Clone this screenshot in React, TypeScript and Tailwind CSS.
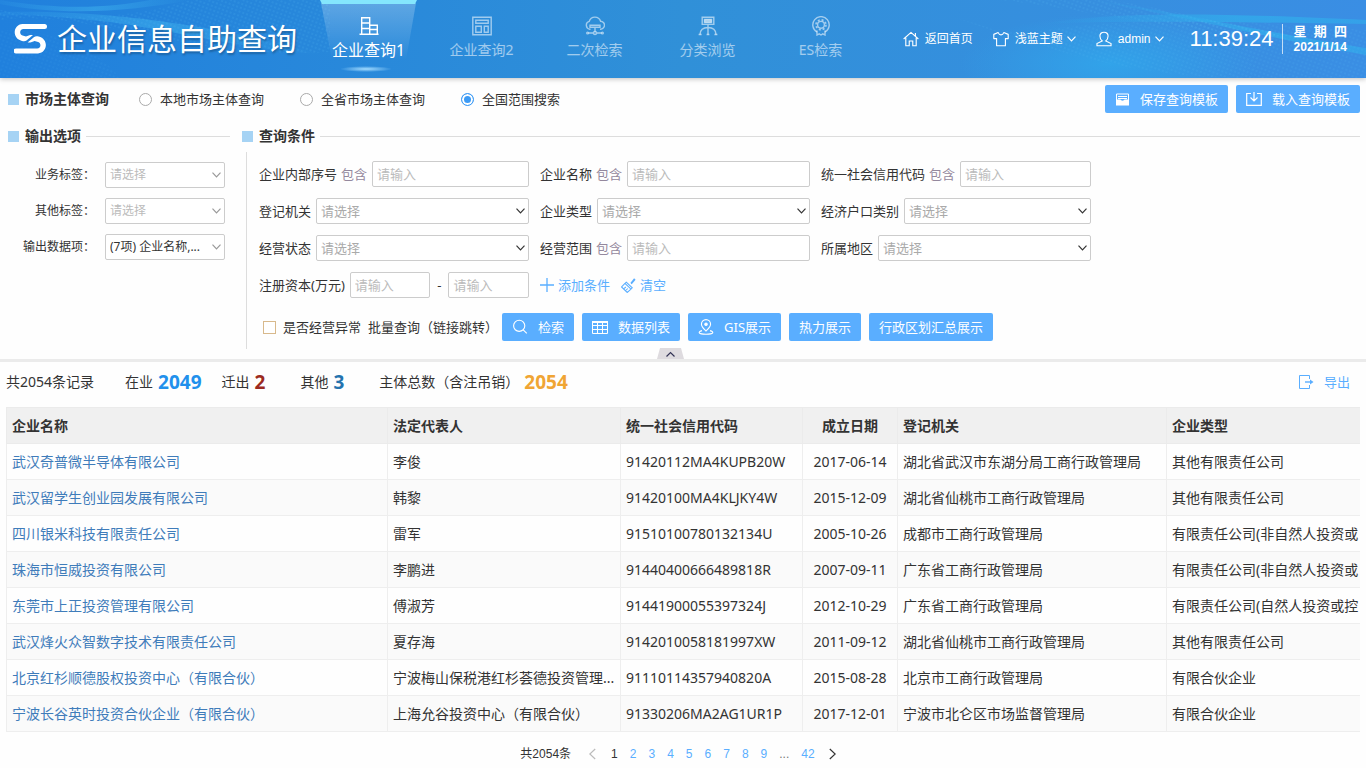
// src/pages/EnterpriseQuery.tsx
import React, { useState } from "react";

type Company = {
  name: string;
  legal: string;
  code: string;
  date: string;
  org: string;
  type: string;
};

const COMPANIES: Company[] = [
  { name: "武汉奇普微半导体有限公司", legal: "李俊", code: "91420112MA4KUPB20W", date: "2017-06-14", org: "湖北省武汉市东湖分局工商行政管理局", type: "其他有限责任公司" },
  { name: "武汉留学生创业园发展有限公司", legal: "韩黎", code: "91420100MA4KLJKY4W", date: "2015-12-09", org: "湖北省仙桃市工商行政管理局", type: "其他有限责任公司" },
  { name: "四川银米科技有限责任公司", legal: "雷军", code: "91510100780132134U", date: "2005-10-26", org: "成都市工商行政管理局", type: "有限责任公司(非自然人投资或" },
  { name: "珠海市恒威投资有限公司", legal: "李鹏进", code: "91440400666489818R", date: "2007-09-11", org: "广东省工商行政管理局", type: "有限责任公司(非自然人投资或" },
  { name: "东莞市上正投资管理有限公司", legal: "傅淑芳", code: "91441900055397324J", date: "2012-10-29", org: "广东省工商行政管理局", type: "有限责任公司(自然人投资或控" },
  { name: "武汉烽火众智数字技术有限责任公司", legal: "夏存海", code: "9142010058181997XW", date: "2011-09-12", org: "湖北省仙桃市工商行政管理局", type: "其他有限责任公司" },
  { name: "北京红杉顺德股权投资中心（有限合伙）", legal: "宁波梅山保税港红杉荟德投资管理...", code: "91110114357940820A", date: "2015-08-28", org: "北京市工商行政管理局", type: "有限合伙企业" },
  { name: "宁波长谷英时投资合伙企业（有限合伙）", legal: "上海允谷投资中心（有限合伙）", code: "91330206MA2AG1UR1P", date: "2017-12-01", org: "宁波市北仑区市场监督管理局", type: "有限合伙企业" },
];

const SCOPES = ["本地市场主体查询", "全省市场主体查询", "全国范围搜索"];

/* ---------- icons ---------- */

function Svg({ size, children, className }: { size: number; children: React.ReactNode; className?: string }) {
  return (
    <svg width={size} height={size} viewBox="0 0 20 20" fill="none" stroke="currentColor" strokeWidth="1.4" className={`shrink-0 ${className ?? ""}`} aria-hidden="true">
      {children}
    </svg>
  );
}

const BuildingIcon = () => (
  <Svg size={20} className="relative">
    <path d="M2.7 18V1.7h8V18M10.7 9.2h7.6V18M.5 18.3h19M3 7h7.5M3 12.5h7.5M11 13.5h7" />
  </Svg>
);
const LayoutIcon = () => (
  <Svg size={20}>
    <path d="M.8 1.2h18.4v17.6H.8zM3.8 4.2h12.4v3H3.8zM3.8 10.2h5.5v6H3.8zM12.3 10.2h3.9v6h-3.9z" />
  </Svg>
);
const CloudIcon = () => (
  <Svg size={20}>
    <path d="M5.5 13.2H4.8a4 4 0 0 1-.6-7.8A6 6 0 0 1 15.6 5.2a4 4 0 0 1-.2 8H15M5 9.3h10v2H5zM10 11.5v4M3.5 17H8M12 17h4.5" />
    <circle cx="10" cy="17" r="1.5" />
    <circle cx="2.6" cy="17" r=".9" />
    <circle cx="17.4" cy="17" r=".9" />
  </Svg>
);
const BrowseIcon = () => (
  <Svg size={20}>
    <path d="M4.2 1.2h11.6v7.2H4.2zM10 8.4v10M2 18.5c.2-4.5 3-7 8-7s7.8 2.5 8 7" />
    <path d="M6.5 3.5h7v3h-7z" fill="currentColor" />
    <path d="M.6 18.5h3M8.6 18.5h2.8M16.4 18.5h3" />
  </Svg>
);
const MedalIcon = () => (
  <Svg size={20}>
    <path d="M6 16a8.200 8.200 0 1 1 8 0" />
    <circle cx="10" cy="8.800" r="3.400" />
    <circle cx="10" cy="8.800" r="5" strokeWidth="1.600" strokeDasharray="2 1.930" />
    <path d="M6 14.500v4.500l2.200-1.200L10 19l1.800-1.200L14 19v-4.500" />
  </Svg>
);
const HomeIcon = () => (
  <Svg size={16}>
    <path d="M.8 10 10 1.800l9.200 8.200M3.500 8.500v10h4.300v-6h4.400v6h4.300v-10M15.500 2.500v4" />
  </Svg>
);
const ShirtIcon = () => (
  <Svg size={16}>
    <path d="M6.500 2 1 4.200v5.300h3.500v9h11v-9H19V4.200L13.500 2c-.8 1.900-2 2.800-3.500 2.800S7.300 3.900 6.500 2z" strokeLinejoin="round" />
  </Svg>
);
const UserIcon = () => (
  <Svg size={16}>
    <path d="M7.800 12.500C5.800 11 4.900 9 4.900 6.400 4.900 3.500 7 1.500 10 1.500s5.100 2 5.100 4.900c0 2.600-.9 4.600-2.900 6.100l6.600 3.200v2.800H1.200v-2.800z" />
  </Svg>
);
const SaveIcon = () => (
  <svg width="15" height="13" viewBox="0 0 15 13" className="shrink-0" aria-hidden="true">
    <path d="M1.500 7V1h12v6M3 3.500h9M3 5.500h9" fill="none" stroke="#fff" />
    <path d="M1 6.500h4.500c.3 1.500 3.700 1.500 4 0H14v6H1z" fill="#fff" />
  </svg>
);
const LoadIcon = () => (
  <svg width="16" height="14" viewBox="0 0 16 14" fill="none" stroke="#fff" className="shrink-0" aria-hidden="true">
    <path d="M5 1.500H.7v11.800h14.600V1.500H11M8 0v9M4.500 5.500 8 9l3.500-3.500" strokeWidth="1.200" />
  </svg>
);
const SearchIcon = () => (
  <Svg size={16}>
    <circle cx="9" cy="8.500" r="7" />
    <path d="m14 13.500 4.500 4.500" />
  </Svg>
);
const GridIcon = () => (
  <svg width="16" height="13" viewBox="0 0 16 13" fill="none" stroke="#fff" className="shrink-0" aria-hidden="true">
    <path d="M.5 1v11.500h15V1M.5 4.500h15M.5 8.500h15M5.500 1v11.500M10.500 1v11.500" />
    <path d="M0 1h16" strokeWidth="2" />
  </svg>
);
const PinIcon = () => (
  <Svg size={16}>
    <path d="M10 15c-3-3-5.700-5.400-5.700-8.500A5.700 5.700 0 0 1 10 .8a5.700 5.700 0 0 1 5.700 5.700C15.700 9.600 13 12 10 15zM5 14.500c-5.500 1.500-5 4.500 5 4.500s10.500-3 5-4.500" />
    <circle cx="10" cy="6.500" r="1.500" fill="currentColor" />
  </Svg>
);
const PlusIcon = () => (
  <svg width="14" height="14" viewBox="0 0 14 14" stroke="currentColor" strokeWidth="1.300" aria-hidden="true">
    <path d="M7 0v14M0 7h14" />
  </svg>
);
const BroomIcon = () => (
  <Svg size={15}>
    <path d="m13 7 4.500-5.500 1 1L13.800 8M7 5.500l8 7.500-1.700 1.800-8-7.500zM5.300 7.300.8 12l7.500 7.300 5-4.500M3.500 14.500l3-2.500M6 17l3-3" />
  </Svg>
);
const ExportIcon = () => (
  <svg width="15" height="14" viewBox="0 0 15 14" fill="none" stroke="currentColor" aria-hidden="true">
    <path d="M10.500 4V.5H.5v13h10V10" />
    <path d="M6 7h6" strokeWidth="1.400" />
    <path d="M11 4.500 14.500 7 11 9.500z" fill="currentColor" stroke="none" />
  </svg>
);
const Chevron = ({ className }: { className?: string }) => (
  <svg width="9" height="6" viewBox="0 0 9 6" fill="none" stroke="currentColor" strokeWidth="1.200" className={className} aria-hidden="true">
    <path d="M.5.700 4.500 4.800 8.500.700" />
  </svg>
);
const PageArrow = ({ className }: { className?: string }) => (
  <svg width="7" height="12" viewBox="0 0 7 12" fill="none" stroke="currentColor" strokeWidth="1.200" className={className} aria-hidden="true">
    <path d="M.8 1 6.200 6 .8 11" />
  </svg>
);

const NAV = [
  { label: "企业查询1", Icon: BuildingIcon },
  { label: "企业查询2", Icon: LayoutIcon },
  { label: "二次检索", Icon: CloudIcon },
  { label: "分类浏览", Icon: BrowseIcon },
  { label: "ES检索", Icon: MedalIcon },
];

/* ---------- small parts ---------- */

function SectionTitle({ children }: { children: React.ReactNode }) {
  return (
    <div className="flex items-center gap-[6px]">
      <span className="h-[11px] w-[11px] bg-[#a6d3f4]" />
      <h2 className="text-sm leading-5 font-bold text-[#333]">{children}</h2>
    </div>
  );
}

function TextField({ label, op, id }: { label: string; op?: string; id: string }) {
  return (
    <div className="flex items-center gap-[5px]">
      <label htmlFor={id} className="flex shrink-0 gap-1">
        {label}
        {op && <span className="text-[#94889d]">{op}</span>}
      </label>
      <input id={id} type="text" placeholder="请输入" className="h-[26px] min-w-0 flex-1 rounded-[2px] border border-[#ccc] bg-white px-1 outline-none placeholder:text-[#bbb]" />
    </div>
  );
}

function SelectField({ label, id }: { label: string; id: string }) {
  return (
    <div className="flex items-center gap-[5px]">
      <label htmlFor={id} className="shrink-0">{label}</label>
      <div className="relative min-w-0 flex-1">
        <select id={id} className="block h-[26px] w-full appearance-none rounded-[2px] border border-[#ccc] bg-white px-1 text-[#aaa] outline-none">
          <option>请选择</option>
        </select>
        <Chevron className="pointer-events-none absolute top-[10px] right-1 text-[#333]" />
      </div>
    </div>
  );
}

function OutputSelect({ label, value, id, filled }: { label: string; value: string; id: string; filled?: boolean }) {
  return (
    <div className="flex items-center justify-end gap-[10px] text-xs">
      <label htmlFor={id} className="whitespace-nowrap">{label}</label>
      <div className="relative w-[120px] shrink-0">
        <select id={id} className={`block h-[26px] w-full appearance-none rounded-[2px] border border-[#ccc] bg-white px-1 outline-none ${filled ? "text-[#333]" : "text-[#bbb]"}`}>
          <option>{value}</option>
        </select>
        <Chevron className="pointer-events-none absolute top-[10px] right-1 text-[#999]" />
      </div>
    </div>
  );
}

function BlueButton({ icon, children }: { icon?: React.ReactNode; children: React.ReactNode }) {
  return (
    <button type="button" className="flex h-7 shrink-0 items-center gap-[10px] rounded-[2px] bg-[#5aaeff] px-[10px] text-[13px] whitespace-nowrap text-white">
      {icon}
      {children}
    </button>
  );
}

function HeaderWaves() {
  return (
    <svg className="absolute inset-0 h-full w-full" viewBox="0 0 1366 78" preserveAspectRatio="none" aria-hidden="true">
      <defs>
        <linearGradient id="wave" x1="0" x2="1">
          <stop offset="0" stopColor="#3fb4ee" stopOpacity=".1" />
          <stop offset=".5" stopColor="#3fb4ee" stopOpacity=".5" />
          <stop offset="1" stopColor="#3fb4ee" stopOpacity="0" />
        </linearGradient>
        <linearGradient id="band" x1="0" x2="1">
          <stop offset="0" stopColor="#30b4ee" stopOpacity="0" />
          <stop offset=".6" stopColor="#30b4ee" stopOpacity=".6" />
          <stop offset="1" stopColor="#30b4ee" stopOpacity=".5" />
        </linearGradient>
        <radialGradient id="light">
          <stop offset="0" stopColor="#30a8ec" stopOpacity=".8" />
          <stop offset="1" stopColor="#30a8ec" stopOpacity="0" />
        </radialGradient>
        <pattern id="dots" width="4" height="4" patternUnits="userSpaceOnUse" patternTransform="rotate(20)">
          <circle cx="1" cy="1" r=".7" fill="#5cc0f2" fillOpacity=".6" />
        </pattern>
      </defs>
      <ellipse cx="1110" cy="64" rx="150" ry="50" fill="url(#light)" />
      <path d="M0 4C60 16 130 12 190 0H150C110 8 60 10 0 0z" fill="url(#wave)" />
      <path d="M0 12C80 10 190 18 320 54C240 50 160 26 90 20C50 16 20 14 0 16z" fill="url(#wave)" />
      <path d="M0 20C90 8 180 60 330 52V0H190C130 20 60 20 0 10z" fill="url(#dots)" fillOpacity=".6" />
      <path d="M0 30C40 30 90 40 120 78H0z" fill="url(#dots)" fillOpacity=".3" />
      <path d="M1090 0C1160 8 1240 28 1366 48V55C1260 36 1180 16 1090 0z" fill="url(#band)" />
      <path d="M1040 24C1110 12 1200 12 1366 20V24C1230 22 1120 20 1040 24z" fill="url(#band)" />
      <path d="M900 0C1000 30 1100 78 1250 78H1366V30C1250 22 1150 12 1020 34C970 24 930 10 900 0z" fill="url(#dots)" fillOpacity=".5" />
      <path d="M1000 0C1080 8 1180 34 1290 36C1210 20 1150 6 1110 0z" fill="url(#dots)" fillOpacity=".6" />
    </svg>
  );
}

/* ---------- page ---------- */

export default function EnterpriseQueryPage() {
  const [scope, setScope] = useState(2);
  const [page, setPage] = useState(1);
  const [abnormal, setAbnormal] = useState(false);

  return (
    <div className="flex min-h-screen flex-col overflow-hidden bg-[#fefefe] font-['Noto_Sans','Noto_Sans_CJK_SC',sans-serif] text-[13px] leading-5 text-[#333]">

      {/* Top bar */}
      <header className="relative z-10 h-[78px] bg-linear-to-r from-[#2080dd] via-[#3090d8] to-[#3a8ee4] text-white shadow-[0_1px_5px_rgba(0,0,0,0.25)]">
        <HeaderWaves />
        <div className="relative flex h-full items-center">
          <div className="flex w-[312px] shrink-0 items-center gap-[10px] pl-[14px]">
            <svg width="33" height="30" viewBox="0 0 33 30" fill="#fff" aria-hidden="true">
              <path d="M8.500 0H30.500a2.500 2.500 0 0 1 0 5H9.500C5.500 5 5 10.300 8.500 11.500L12 12.500C14 11.500 16 10.800 19 11L12.500 16.500C11.500 17.300 10 17.500 8 17 -2.500 14.500 -1 .5 8.500 0z" />
              <path d="M8.500 0H30.500a2.500 2.500 0 0 1 0 5H9.500C5.500 5 5 10.300 8.500 11.500L12 12.500C14 11.500 16 10.800 19 11L12.500 16.500C11.500 17.300 10 17.500 8 17 -2.500 14.500 -1 .5 8.500 0z" transform="rotate(180 16.300 14.700)" />
            </svg>
            <h1 className="text-[30px] leading-10 whitespace-nowrap text-shadow-[1px_2px_2px_rgba(0,0,0,0.25)]">企业信息自助查询</h1>
          </div>

          <nav className="flex h-full">
            {NAV.map(({ label, Icon }, i) => (
              <a key={label} href="#" className={`relative flex w-[113px] flex-col items-center pt-4 leading-5 whitespace-nowrap ${i === 0 ? "text-base text-white" : "text-sm text-white/55"}`}>
                {i === 0 && (
                  <svg className="absolute top-0 left-2" width="97" height="78" viewBox="0 0 97 78" aria-hidden="true">
                    <defs>
                      <linearGradient id="beam" x1="0" y1="0" x2="0" y2="1">
                        <stop offset="0" stopColor="#fff" stopOpacity=".25" />
                        <stop offset="1" stopColor="#fff" stopOpacity="0" />
                      </linearGradient>
                      <radialGradient id="glow">
                        <stop offset="0" stopColor="#a4dcff" />
                        <stop offset="1" stopColor="#a4dcff" stopOpacity="0" />
                      </radialGradient>
                    </defs>
                    <path d="M1 3H96L86 60H12z" fill="url(#beam)" />
                    <path d="M0 0H97L95 4H2z" fill="#84e6fd" />
                    <ellipse cx="46" cy="69" rx="26" ry="3" fill="url(#glow)" />
                  </svg>
                )}
                <Icon />
                <span className="relative pt-1">{label}</span>
              </a>
            ))}
          </nav>

          <div className="ml-auto flex shrink-0 items-center pr-[19px] font-['Liberation_Sans','Noto_Sans_CJK_SC',sans-serif] text-xs whitespace-nowrap">
            <a href="#" className="flex items-center gap-[6px]"><HomeIcon />返回首页</a>
            <button type="button" className="ml-5 flex items-center gap-1"><ShirtIcon /><span className="pl-[2px]">浅蓝主题</span><Chevron /></button>
            <button type="button" className="ml-5 flex items-center gap-1"><UserIcon /><span className="pl-[2px]">admin</span><Chevron /></button>
            <time className="ml-[26px] text-[22px]">11:39:24</time>
            <div className="ml-2 border-l border-white/70 pl-[11px] font-bold">
              <div className="text-[13px] leading-4 whitespace-pre">星  期  四</div>
              <div className="leading-[14px]">2021/1/14</div>
            </div>
          </div>
        </div>
      </header>

      {/* Query panel */}
      <section className="relative border-b-[3px] border-[#ebebeb] pt-[7px] pr-[6px] pb-[10px] pl-2">
        <div className="flex items-center">
          <SectionTitle>市场主体查询</SectionTitle>
          <div className="flex gap-9 pl-[30px]">
            {SCOPES.map((s, i) => (
              <label key={s} className="flex items-center gap-2">
                <input
                  type="radio"
                  name="scope"
                  checked={scope === i}
                  onChange={() => setScope(i)}
                  className="h-[13px] w-[13px] appearance-none rounded-full border border-[#aaa] bg-white checked:border-[#3d9bf5] checked:bg-[#3d9bf5] checked:shadow-[inset_0_0_0_2px_#fff]"
                />
                {s}
              </label>
            ))}
          </div>
          <div className="ml-auto flex gap-2">
            <BlueButton icon={<SaveIcon />}>保存查询模板</BlueButton>
            <BlueButton icon={<LoadIcon />}>载入查询模板</BlueButton>
          </div>
        </div>

        <div className="flex gap-3 pt-[13px]">
          {/* Output options */}
          <div className="w-[222px] shrink-0">
            <div className="flex items-center gap-[5px]">
              <SectionTitle>输出选项</SectionTitle>
              <span className="h-px flex-1 bg-[#ddd]" />
            </div>
            <div className="flex flex-col gap-[10px] pt-4 pr-[5px]">
              <OutputSelect id="biz-tag" label="业务标签：" value="请选择" />
              <OutputSelect id="other-tag" label="其他标签：" value="请选择" />
              <OutputSelect id="out-items" label="输出数据项：" value="(7项) 企业名称,..." filled />
            </div>
          </div>

          {/* Conditions */}
          <div className="min-w-0 flex-1">
            <div className="flex items-center gap-[5px]">
              <SectionTitle>查询条件</SectionTitle>
              <span className="h-px flex-1 bg-[#ddd]" />
            </div>
            <div className="mt-[6px] ml-1 border-l border-[#ddd] pt-[9px] pb-2 pl-3">
              <div className="grid max-w-[832px] grid-cols-3 gap-x-[11px] gap-y-[11px]">
                <TextField id="inner-no" label="企业内部序号" op="包含" />
                <TextField id="ent-name" label="企业名称" op="包含" />
                <TextField id="uscc" label="统一社会信用代码" op="包含" />
                <SelectField id="reg-org" label="登记机关" />
                <SelectField id="ent-type" label="企业类型" />
                <SelectField id="acct-type" label="经济户口类别" />
                <SelectField id="biz-state" label="经营状态" />
                <TextField id="biz-scope" label="经营范围" op="包含" />
                <SelectField id="area" label="所属地区" />
                <div className="flex items-center gap-[5px]">
                  <label htmlFor="cap-min" className="shrink-0">注册资本(万元)</label>
                  <input id="cap-min" type="text" placeholder="请输入" className="h-[26px] min-w-0 flex-1 rounded-[2px] border border-[#ccc] bg-white px-1 outline-none placeholder:text-[#bbb]" />
                  <span className="w-2 text-center">-</span>
                  <input id="cap-max" type="text" aria-label="注册资本上限" placeholder="请输入" className="h-[26px] min-w-0 flex-1 rounded-[2px] border border-[#ccc] bg-white px-1 outline-none placeholder:text-[#bbb]" />
                </div>
                <div className="flex items-center gap-[11px] text-[#5aaeff]">
                  <button type="button" className="flex items-center gap-1"><PlusIcon />添加条件</button>
                  <button type="button" className="flex items-center gap-1"><BroomIcon />清空</button>
                </div>
              </div>

              <div className="flex items-center gap-2 pt-[15px]">
                <div className="-mr-1 flex items-center gap-[7px] pl-1">
                  <label className="flex items-center gap-[7px]">
                    <input
                      type="checkbox"
                      checked={abnormal}
                      onChange={(e) => setAbnormal(e.target.checked)}
                      className="h-[13px] w-[13px] appearance-none border border-[#d8b98c] bg-white checked:bg-[#5aaeff]"
                    />
                    是否经营异常
                  </label>
                  <a href="#" className="whitespace-nowrap">批量查询（链接跳转）</a>
                </div>
                <BlueButton icon={<SearchIcon />}>检索</BlueButton>
                <BlueButton icon={<GridIcon />}>数据列表</BlueButton>
                <BlueButton icon={<PinIcon />}>GIS展示</BlueButton>
                <BlueButton>热力展示</BlueButton>
                <BlueButton>行政区划汇总展示</BlueButton>
              </div>
            </div>
          </div>
        </div>

        {/* Collapse handle */}
        <button type="button" aria-label="收起" className="absolute bottom-0 left-[657px] text-[#335]">
          <svg width="27" height="11" viewBox="0 0 27 11" fill="none" aria-hidden="true">
            <path d="M3 0H24L27 11H0z" fill="#dedbdf" />
            <path d="M9.500 8.500 13.500 4.500 17.500 8.500" stroke="currentColor" strokeWidth="1.200" />
          </svg>
        </button>
      </section>

      {/* Summary */}
      <section className="flex items-center px-[6px] pt-[9px] pb-[14px] text-sm leading-[22px]">
        <span>共2054条记录</span>
        <span className="flex items-center gap-[5px] pl-[31px]">在业 <b className="text-[19px] text-[#2190ec]">2049</b></span>
        <span className="flex items-center gap-[5px] pl-5">迁出 <b className="text-[19px] text-[#9c2a20]">2</b></span>
        <span className="flex items-center gap-[5px] pl-[35px]">其他 <b className="text-[19px] text-[#2473ae]">3</b></span>
        <span className="flex items-center gap-[5px] pl-[35px]">主体总数（含注吊销） <b className="text-[19px] text-[#f0a534]">2054</b></span>
        <button type="button" className="ml-auto flex items-center gap-[10px] pr-[10px] text-[13px] text-[#5aaeff]"><ExportIcon />导出</button>
      </section>

      {/* Results */}
      <div className="mx-[6px] overflow-hidden text-sm">
        <table className="w-full table-fixed border-collapse text-left whitespace-nowrap">
          <colgroup>
            <col className="w-[381px]" />
            <col className="w-[233px]" />
            <col className="w-[182px]" />
            <col className="w-[95px]" />
            <col className="w-[269px]" />
            <col />
          </colgroup>
          <thead>
            <tr className="h-9 bg-[#f0f0f0]">
              {["企业名称", "法定代表人", "统一社会信用代码", "成立日期", "登记机关", "企业类型"].map((h) => (
                <th key={h} className={`border border-r-0 border-[#ebebeb] px-[5px] py-0 font-bold ${h === "成立日期" ? "text-center" : ""}`}>{h}</th>
              ))}
            </tr>
          </thead>
          <tbody>
            {COMPANIES.map((c) => (
              <tr key={c.code} className="h-9 even:bg-[#fafafa]">
                <td className="border border-r-0 border-[#eee] px-[5px] py-0"><a href="#" className="text-[#3f7cba]">{c.name}</a></td>
                <td className="overflow-hidden border border-r-0 border-[#eee] px-[5px] py-0">{c.legal}</td>
                <td className="border border-r-0 border-[#eee] px-[5px] py-0">{c.code}</td>
                <td className="border border-r-0 border-[#eee] px-[5px] py-0 text-center">{c.date}</td>
                <td className="border border-r-0 border-[#eee] px-[5px] py-0">{c.org}</td>
                <td className="border border-r-0 border-[#eee] px-[5px] py-0">{c.type}</td>
              </tr>
            ))}
          </tbody>
        </table>
      </div>

      {/* Pagination */}
      <nav className="flex items-center justify-center gap-3 pt-[14px] pr-[10px] font-['Liberation_Sans','Noto_Sans_CJK_SC',sans-serif] text-xs text-[#5aaeff]">
        <span className="pr-[6px] text-[#333]">共2054条</span>
        <button type="button" aria-label="上一页" className="pr-[3px] text-[#bbb]"><PageArrow className="rotate-180" /></button>
        {[1, 2, 3, 4, 5, 6, 7, 8, 9].map((n) => (
          <button key={n} type="button" onClick={() => setPage(n)} className={n === page ? "text-[#333]" : ""}>{n}</button>
        ))}
        <span className="text-[#777]">...</span>
        <button type="button" onClick={() => setPage(42)} className={page === 42 ? "text-[#333]" : ""}>42</button>
        <button type="button" aria-label="下一页" className="pl-[2px] text-[#333]"><PageArrow /></button>
      </nav>
    </div>
  );
}
